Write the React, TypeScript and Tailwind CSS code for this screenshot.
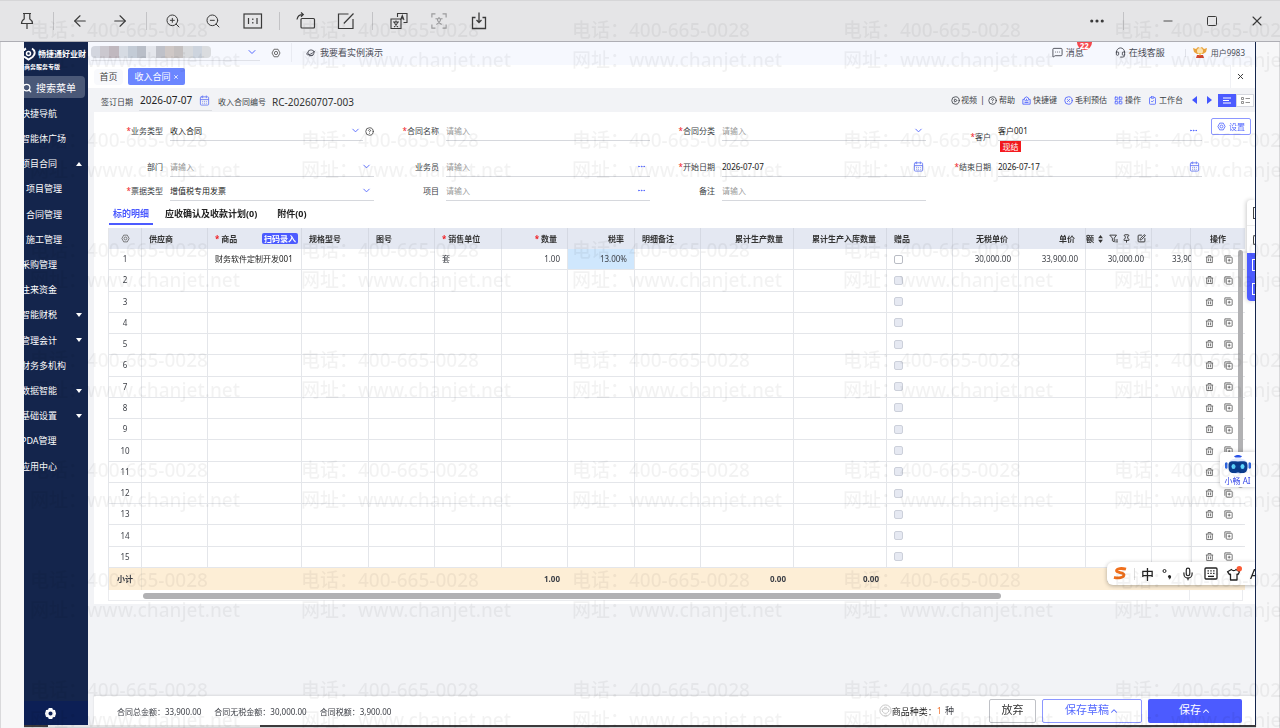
import { useState } from 'react'
import type { ReactNode } from 'react'
import {
  ArrowLeft,
  ArrowRight,
  CalendarDays,
  ChevronDown,
  ChevronUp,
  CircleHelp,
  CirclePercent,
  CirclePlay,
  ClipboardCheck,
  Ellipsis,
  Headset,
  LayoutGrid,
  MessageSquareMore,
  Mic,
  Minus,
  Pin,
  Search,
  Square,
  SquarePen,
  X,
  ZoomIn,
  ZoomOut,
} from 'lucide-react'

const menu = [
  { name: '快捷导航' },
  { name: '智能体广场' },
  { name: '项目合同', arrow: 'up' },
  { name: '项目管理', child: true },
  { name: '合同管理', child: true },
  { name: '施工管理', child: true },
  { name: '采购管理' },
  { name: '往来资金' },
  { name: '智能财税', arrow: 'down' },
  { name: '管理会计', arrow: 'down' },
  { name: '财务多机构' },
  { name: '数据智能', arrow: 'down' },
  { name: '基础设置', arrow: 'down' },
  { name: 'PDA管理' },
  { name: '应用中心' },
]

const colWidths = [33, 66, 94, 67, 66, 67, 66, 67, 66, 93, 93, 66, 66, 67, 66, 39, 54]

const mosaic = [
  'bg-[#d3d6df]', 'bg-[#cbc8cf]', 'bg-[#c0b8bf]', 'bg-[#d6dbe3]', 'bg-[#c3cbd6]', 'bg-[#b9bec8]',
  'bg-[#e4e6ec]', 'bg-[#bfc1c9]', 'bg-[#cfc8c6]', 'bg-[#c4c0c0]', 'bg-[#d8dadd]', 'bg-[#cdd4de]', 'bg-[#dadcdf]',
]

function Nut({ className }: { className?: string }) {
  return (
    <svg viewBox="0 0 16 16" className={className} fill="none" stroke="currentColor" strokeWidth="1.5">
      <path d="M4.8 2h6.4l3.2 6-3.2 6H4.8L1.6 8z" strokeLinejoin="round" />
      <circle cx="8" cy="8" r="2.6" />
    </svg>
  )
}

function Trash() {
  return (
    <svg viewBox="0 0 16 16" className="h-2.5 w-[9px]" fill="none" stroke="currentColor" strokeWidth="1.4">
      <path d="M1.5 4.5h13M5.5 4V1.8h5V4M3 4.5V14.300h10V4.5M6.3 7v5M9.7 7v5" />
    </svg>
  )
}

function CopyRow() {
  return (
    <svg viewBox="0 0 16 16" className="h-[9px] w-[9px]" fill="none" stroke="currentColor" strokeWidth="1.4">
      <rect x="4" y="4" width="10.5" height="10.5" rx="1" />
      <path d="M1.5 12V1.5H12M9.2 6.7v5M6.7 9.2h5" />
    </svg>
  )
}

function ToolButton({ label, children }: { label: string; children: ReactNode }) {
  return (
    <button aria-label={label} className="flex h-full w-10 items-center justify-center">
      {children}
    </button>
  )
}

function ToolDivider() {
  return (
    <div className="flex w-[13px] justify-center">
      <div className="h-[18px] w-px bg-[#c3c3c6]" />
    </div>
  )
}

function WindowBar() {
  return (
    <header className="flex h-[42px] shrink-0 items-center border-t border-b border-t-[#d6d6d8] border-b-[#aeaeb4] bg-[#e5e5e7] pl-[7px] text-[#3a3a3a]">
      <ToolButton label="固定">
        <svg viewBox="0 0 14 18" className="h-[18px] w-3.5" fill="none" stroke="currentColor" strokeWidth="1.2">
          <path d="M3 1.500h8M4.200 1.500v5.500C2.500 8 1.500 9.500 1.500 11.500h11C12.500 9.500 11.500 8 9.800 7V1.500M7 11.500v5.500" />
        </svg>
      </ToolButton>
      <ToolDivider />
      <ToolButton label="上一张">
        <ArrowLeft className="h-[18px] w-[18px]" strokeWidth={1.5} />
      </ToolButton>
      <ToolButton label="下一张">
        <ArrowRight className="h-[18px] w-[18px]" strokeWidth={1.5} />
      </ToolButton>
      <ToolDivider />
      <ToolButton label="放大">
        <ZoomIn className="h-4 w-4" strokeWidth={1.5} />
      </ToolButton>
      <ToolButton label="缩小">
        <ZoomOut className="h-4 w-4" strokeWidth={1.5} />
      </ToolButton>
      <ToolButton label="实际大小">
        <svg viewBox="0 0 20 16" className="h-4 w-5" fill="none" stroke="currentColor" strokeWidth="1.2">
          <rect x="1" y="1" width="17.5" height="14" />
          <path d="M5.5 5v6M14 5v6M9.8 5.5v1.6M9.8 9v1.6" />
        </svg>
      </ToolButton>
      <ToolDivider />
      <ToolButton label="旋转">
        <svg viewBox="0 0 20 18" className="h-[18px] w-5" fill="none" stroke="currentColor" strokeWidth="1.2">
          <rect x="5" y="6.5" width="13.5" height="9.5" rx="1" />
          <path d="M1 7.5C1.5 4.5 3.5 2.5 7 2.6M5 .5l2.3 2.1L5 4.8" />
        </svg>
      </ToolButton>
      <ToolButton label="编辑">
        <svg viewBox="0 0 18 18" className="h-[18px] w-[18px]" fill="none" stroke="currentColor" strokeWidth="1.2">
          <path d="M11.5 2H1.5v14.5H16V7M16.5 1.5L6.8 11.5" />
        </svg>
      </ToolButton>
      <ToolDivider />
      <ToolButton label="翻译">
        <svg viewBox="0 0 18 18" className="h-[18px] w-[18px]" fill="none" stroke="currentColor" strokeWidth="1.1">
          <path d="M7.5 5V1.5H17v9h-3.5" />
          <path d="M1 7h10v9.500H1zM3 10h6M6 8.500V10M4 15c2-1 3.200-2.500 3.700-5M8 15c-2-1-3.200-2.500-3.700-5M10.500 8l1.800-4.500L14 8M11 6.700h2.600" />
        </svg>
      </ToolButton>
      <ToolButton label="识别文字">
        <svg viewBox="0 0 18 18" className="h-4 w-4 text-[#9a9a9c]" fill="none" stroke="currentColor" strokeWidth="1.300">
          <path d="M1 5V1h4M13 1h4v4M17 13v4h-4M5 17H1v-4M5 6.500h8M9 4.500v2M6 13c3-1.500 4.500-3.500 5-6.500M12 13c-3-1.500-4.500-3.500-5-6.500" />
        </svg>
      </ToolButton>
      <ToolButton label="保存图片">
        <svg viewBox="0 0 18 18" className="h-[18px] w-[18px]" fill="none" stroke="currentColor" strokeWidth="1.3">
          <path d="M5.500 5.500H2.500V16.500h13V5.500h-3M9 .5v10M6.500 8L9 10.500 11.500 8" />
        </svg>
      </ToolButton>
      <div className="flex-1" />
      <ToolButton label="更多">
        <Ellipsis className="h-[18px] w-[18px]" strokeWidth={2.2} />
      </ToolButton>
      <ToolDivider />
      <div className="flex h-full pl-4">
        <button aria-label="最小化" className="flex w-11 items-center justify-center">
          <Minus className="h-[14px] w-[14px]" strokeWidth={1.5} />
        </button>
        <button aria-label="最大化" className="flex w-11 items-center justify-center">
          <Square className="h-3 w-3" strokeWidth={2} />
        </button>
        <button aria-label="关闭" className="flex w-[46px] items-center justify-center">
          <X className="h-4 w-4" strokeWidth={1.6} />
        </button>
      </div>
    </header>
  )
}

function Sidebar() {
  return (
    <aside className="flex w-16 shrink-0 flex-col overflow-hidden bg-[#14254c] text-white">
      <div className="flex h-5 items-center gap-0.5 pt-1 whitespace-nowrap">
        <svg viewBox="0 0 12 14" className="h-3.5 w-3 shrink-0" fill="none" stroke="currentColor">
          <circle cx="4.500" cy="6.5" r="2" strokeWidth="1.5" />
          <path d="M8 1.500c3.500 2 3.500 6 .5 8.500L4.500 12.500 0 9.500M2 1.500C.5 2.300 0 3 0 4" strokeWidth="2" />
        </svg>
        <span className="text-[8px] font-bold">畅捷通好业财</span>
      </div>
      <div className="h-3.5 text-[6px] leading-[11px] font-bold whitespace-nowrap">商务服务专版</div>
      <button className="mr-[3px] flex h-[22px] shrink-0 items-center gap-1 rounded-r-sm bg-[#4a5877] pt-0.5 text-[10px]">
        <Search className="-ml-0.5 h-2.5 w-2.5" strokeWidth={3} />
        搜索菜单
      </button>
      <ul className="mt-[3px] flex h-[378px] flex-col text-[9px]">
        {menu.map((item) => (
          <li key={item.name} className="flex flex-1 items-center justify-between pr-1.5">
            <a href="#" className={item.child ? 'ml-0.5 whitespace-nowrap' : '-ml-[3px] whitespace-nowrap'}>
              {item.name}
            </a>
            {item.arrow && (
              <svg viewBox="0 0 6 4" className={item.arrow === 'up' ? 'h-1 w-1.5' : 'h-1 w-1.5 rotate-180'} fill="currentColor">
                <path d="M3 0l3 4H0z" />
              </svg>
            )}
          </li>
        ))}
      </ul>
      <button aria-label="系统设置" className="mt-auto flex h-6 shrink-0 items-center justify-center bg-[#0c1f55] pr-3">
        <svg viewBox="0 0 16 16" className="h-[11px] w-[11px]" fill="currentColor">
          <path fillRule="evenodd" d="M5.500 0h5l1 2.500 3 .5L16 8l-1.500 5-3 .5-1 2.500h-5l-1-2.500-3-.5L0 8l1.500-5 3-.5zM8 5a3 3 0 100 6 3 3 0 000-6z" />
        </svg>
      </button>
    </aside>
  )
}

function TopBar() {
  return (
    <div className="flex h-[23px] shrink-0 items-center bg-[#f6f8fe] pb-0.5 text-[9px] text-[#4a4d57]">
      <button aria-label="切换账套" className="ml-[3px] flex h-[17px] w-[169px] items-center justify-between border-b border-[#dfe1e8] pr-0.5">
        <span className="flex h-3 w-[120px] overflow-hidden rounded-sm">
          {mosaic.map((tone) => (
            <span key={tone} className={`flex-1 ${tone}`} />
          ))}
        </span>
        <ChevronDown className="h-3 w-3 text-[#5468ff]" strokeWidth={2} />
      </button>
      <button aria-label="账套设置" className="ml-[11px] text-[#666]">
        <Nut className="h-2.5 w-2.5" />
      </button>
      <div className="ml-2.5 h-[19px] w-px bg-[#e9ebf2]" />
      <a href="#" className="ml-3.5 flex items-center gap-1">
        <svg viewBox="0 0 16 12" className="h-2 w-2.5" fill="none" stroke="currentColor" strokeWidth="1.4">
          <ellipse cx="8" cy="5.500" rx="5" ry="4.500" />
          <path d="M3.500 5C0 7 .5 9.500 4 8.700 8 8 12.500 5 14.500 2.500M5 10.500l6-.5" />
        </svg>
        我要看实例演示
      </a>
      <div className="flex-1" />
      <a href="#" className="relative mr-[31px] flex h-full items-center gap-[3px]">
        <MessageSquareMore className="h-[11px] w-[11px]" strokeWidth={2} />
        消息
        <span className="absolute top-0 left-[25px] rounded-b-lg bg-[#f5484d] px-[3px] text-[8px] leading-2 font-bold text-white">22</span>
      </a>
      <a href="#" className="mr-5 flex items-center gap-[3px]">
        <Headset className="h-[11px] w-[11px]" strokeWidth={2} />
        在线客服
      </a>
      <div className="mr-[7px] h-2 w-px bg-[#e0e2ea]" />
      <a href="#" className="mr-2.5 flex items-center gap-1 text-[8px]">
        <svg viewBox="0 0 14 13" className="h-[13px] w-3.5">
          <path d="M0 2l3 1 2-2 2 1 2-1 2 2 3-1-1 4-3 2H4L1 6z" fill="#e9a23b" />
          <circle cx="7" cy="5" r="3" fill="#fbe3b0" />
          <path d="M4 9h6l1 3H3z" fill="#d4472e" />
          <path d="M5.500 7h3l-1.500 3z" fill="#f6c34a" />
        </svg>
        用户9983
      </a>
    </div>
  )
}

function PageTabs() {
  return (
    <div className="flex h-[23px] shrink-0 items-center bg-white pl-1.5 text-[9px]">
      <button className="flex h-4 w-[29px] items-center justify-center rounded-sm bg-[#f8f9fc] text-[#444]">首页</button>
      <button className="ml-[5px] flex h-[17px] w-[57px] items-center justify-center gap-0.5 rounded-xs bg-[#6b86ff] text-white">
        收入合同
        <X className="h-1.5 w-1.5" strokeWidth={3} />
      </button>
      <button aria-label="关闭页面" className="mr-[5px] ml-auto flex h-full w-5 items-center justify-center border-l border-[#f0f1f5] text-[#333]">
        <X className="h-[9px] w-[9px]" strokeWidth={2.5} />
      </button>
    </div>
  )
}

function DocBar() {
  return (
    <div className="flex h-6 shrink-0 items-center pl-[13px] text-[8px] text-[#3c3f46]">
      <label htmlFor="signDate" className="pt-1 whitespace-nowrap">签订日期</label>
      <div className="ml-1.5 flex h-[22px] w-[73px] items-center border-b border-[#dcdee2] pt-0.5">
        <input id="signDate" defaultValue="2026-07-07" className="w-[58px] pl-px text-[10px] text-[#222] outline-none" />
        <CalendarDays className="mr-0.5 ml-auto h-[11px] w-[11px] text-[#6f80f5]" strokeWidth={2} />
      </div>
      <span className="ml-1.5 pt-1 whitespace-nowrap">收入合同编号</span>
      <span className="ml-1.5 pt-1 text-[10px] whitespace-nowrap text-[#333]">RC-20260707-003</span>
      <div className="ml-auto flex items-center whitespace-nowrap">
        <a href="#" className="flex items-center gap-px">
          <CirclePlay className="h-[9px] w-[9px]" strokeWidth={2.200} />
          视频
        </a>
        <span className="mx-[3px] text-[9px]">|</span>
        <a href="#" className="flex items-center gap-0.5">
          <CircleHelp className="h-[9px] w-[9px]" strokeWidth={2.200} />
          帮助
        </a>
        <a href="#" className="ml-[7px] flex items-center gap-0.5">
          <svg viewBox="0 0 16 16" className="h-[9px] w-[9px] text-[#5468ff]" fill="none" stroke="currentColor" strokeWidth="1.600">
            <path d="M1.500 6h3V3.500L8 1.500l3.500 2V6h3v8.500h-13zM4.500 8.500h7M4.500 11.500h7M8 5v2" />
          </svg>
          快捷键
        </a>
        <a href="#" className="ml-[7px] flex items-center gap-0.5">
          <CirclePercent className="h-[9px] w-[9px] text-[#5468ff]" strokeWidth={2.400} />
          毛利预估
        </a>
        <a href="#" className="ml-[7px] flex items-center gap-0.5">
          <LayoutGrid className="h-[9px] w-[9px] text-[#5468ff]" strokeWidth={2.400} />
          操作
        </a>
        <a href="#" className="ml-[7px] flex items-center gap-0.5">
          <ClipboardCheck className="h-[9px] w-[9px] text-[#5468ff]" strokeWidth={2.200} />
          工作台
        </a>
        <button aria-label="上一单" className="ml-[9px] text-[#4356ff]">
          <svg viewBox="0 0 5 8" className="h-2 w-[5px]" fill="currentColor"><path d="M5 0v8L0 4z" /></svg>
        </button>
        <button aria-label="下一单" className="mr-1.5 ml-2.5 text-[#4356ff]">
          <svg viewBox="0 0 5 8" className="h-2 w-[5px]" fill="currentColor"><path d="M0 0v8l5-4z" /></svg>
        </button>
        <button aria-label="列表模式" className="flex h-[13px] w-[18px] items-center justify-center bg-[#4c5bff] text-white">
          <svg viewBox="0 0 8 7" className="h-[7px] w-2" stroke="currentColor"><path d="M0 1h8M0 3.500h6M0 6h8" /></svg>
        </button>
        <button aria-label="卡片模式" className="mr-px flex h-[13px] w-[18px] items-center justify-center border border-[#d5d7de] bg-white text-[#777]">
          <svg viewBox="0 0 9 7" className="h-[7px] w-[9px]" fill="none" stroke="currentColor" strokeWidth="0.800">
            <path d="M.5.5h2v2h-2zM.5 4.500h2v2h-2zM4.500 1.500H9M4.500 5.500H9" />
          </svg>
        </button>
      </div>
    </div>
  )
}

type FieldProps = {
  id: string
  label: string
  required?: boolean
  value?: string
  kind: 'select' | 'text' | 'lookup' | 'date'
  help?: boolean
  tag?: string
  focused?: boolean
}

function Field({ id, label, required, value, kind, help, tag, focused }: FieldProps) {
  return (
    <div className={tag ? 'flex items-center gap-[7px]' : 'flex items-start gap-[7px]'}>
      <label htmlFor={id} className="w-[65px] text-right leading-5 text-[#3c3f46]">
        {required && <span className="text-[#f0191e]">*</span>}
        {label}
      </label>
      <div className="min-w-0 flex-1">
        <div className="flex items-center">
          <div className="flex h-5 flex-1 items-center border-b border-[#d6d8dd]">
            {kind === 'select' ? (
              <select id={id} defaultValue={value ?? ''} className={value ? 'min-w-0 flex-1 appearance-none text-[#222] outline-none' : 'min-w-0 flex-1 appearance-none text-[#999] outline-none'}>
                <option value={value ?? ''}>{value ?? '请输入'}</option>
              </select>
            ) : (
              <input id={id} defaultValue={value} autoFocus={focused} placeholder="请输入" className="min-w-0 flex-1 text-[#222] outline-none placeholder:text-[#999]" />
            )}
            {kind === 'select' && <ChevronDown className="mr-0.5 h-[11px] w-[11px] text-[#5468ff]" strokeWidth={2} />}
            {kind === 'lookup' && (
              <button type="button" aria-label={`选择${label}`} className="mr-1 text-[#5468ff]">
                <Ellipsis className="h-[9px] w-[9px]" strokeWidth={2.5} />
              </button>
            )}
            {kind === 'date' && <CalendarDays className="mr-0.5 h-[11px] w-[11px] text-[#6f80f5]" strokeWidth={2} />}
          </div>
          {help && <CircleHelp className="ml-0.5 h-[9px] w-[9px] text-[#444]" strokeWidth={2.200} />}
        </div>
        {tag && <span className="ml-0.5 block h-[11px] w-[21px] bg-[#f5191e] text-center leading-[11px] text-white">{tag}</span>}
      </div>
    </div>
  )
}

function ContractForm() {
  return (
    <div className="flex items-start pt-[9px] pr-1 pl-1 text-[8px]">
      <form className="grid flex-1 grid-cols-4 items-start gap-y-1">
        <Field id="bizType" label="业务类型" required kind="select" value="收入合同" help />
        <Field id="contractName" label="合同名称" required kind="text" />
        <Field id="contractClass" label="合同分类" required kind="select" />
        <div className="pb-px">
          <Field id="customer" label="客户" required kind="lookup" value="客户001" tag="现结" />
        </div>
        <Field id="dept" label="部门" kind="select" />
        <Field id="salesman" label="业务员" kind="lookup" />
        <Field id="startDate" label="开始日期" required kind="date" value="2026-07-07" />
        <Field id="endDate" label="结束日期" required kind="date" value="2026-07-17" focused />
        <Field id="billType" label="票据类型" required kind="select" value="增值税专用发票" />
        <Field id="project" label="项目" kind="lookup" />
        <Field id="remark" label="备注" kind="text" />
      </form>
      <button className="-mt-[3px] ml-[9px] flex h-[17px] w-10 items-center justify-center gap-[3px] rounded-xs border border-[#8c97ff] text-[#5468ff]">
        <Nut className="h-[9px] w-[9px]" />
        设置
      </button>
    </div>
  )
}

function Th({ children, right, required }: { children?: ReactNode; right?: boolean; required?: boolean }) {
  return (
    <th className={right ? 'overflow-hidden border-r border-[#d5d9e3] px-2.5 text-right' : 'overflow-hidden border-r border-[#d5d9e3] px-[7px] text-left'}>
      {required && <span className="mr-0.5 text-[#f0191e]">*</span>}
      {children}
    </th>
  )
}

function DetailTable() {
  const cell = 'overflow-hidden border-r border-b border-[#e4e6ea] px-[7px]'
  return (
    <div className="relative mr-3 ml-3.5">
      <table className="h-[362px] w-full table-fixed border-separate border-spacing-0 border-l border-[#e4e6ea] text-[8px] whitespace-nowrap text-[#3c3f46]">
        <colgroup>
          {colWidths.map((w, i) => (
            <col key={i} style={{ width: w }} />
          ))}
        </colgroup>
        <thead className="bg-[#e4e8f2] text-[#333]">
          <tr className="h-[21px]">
            <th className="border-r border-[#d5d9e3]">
              <Nut className="mx-auto h-[9px] w-[9px] text-[#666]" />
            </th>
            <Th>供应商</Th>
            <th className="border-r border-[#d5d9e3] px-[7px]">
              <div className="flex items-center">
                <span className="mr-0.5 text-[#f0191e]">*</span>商品
                <button className="-mr-1 ml-auto h-[11px] w-9 rounded-xs bg-[#4c5bff] leading-[11px] text-white">扫码录入</button>
              </div>
            </th>
            <Th>规格型号</Th>
            <Th>图号</Th>
            <Th required>销售单位</Th>
            <Th right required>数量</Th>
            <Th right>税率</Th>
            <Th>明细备注</Th>
            <Th right>累计生产数量</Th>
            <Th right>累计生产入库数量</Th>
            <Th>赠品</Th>
            <Th right>无税单价</Th>
            <Th right>单价</Th>
            <th className="overflow-hidden border-r border-[#d5d9e3]">
              <div className="flex items-center gap-1">
                额
                <svg viewBox="0 0 6 10" className="h-2 w-[5px]" fill="currentColor">
                  <path d="M3 0l3 4H0zM3 10L0 6h6z" />
                </svg>
                <svg viewBox="0 0 12 12" className="ml-0.5 h-[9px] w-[9px]" fill="none" stroke="currentColor" strokeWidth="1.200">
                  <path d="M1 1.500h9L7 5.500v5L4.500 9V5.500zM8.500 8H12M8.500 10.500H12" />
                </svg>
                <Pin className="h-[9px] w-[9px]" strokeWidth={2.500} />
                <SquarePen className="ml-0.5 h-[9px] w-[9px]" strokeWidth={2.500} />
              </div>
            </th>
            <Th />
            <th>操作</th>
          </tr>
        </thead>
        <tbody>
          {Array.from({ length: 15 }, (_, i) => {
            const filled = i === 0
            return (
              <tr key={i}>
                <td className={`${cell} text-center`}>{i + 1}</td>
                <td className={cell} />
                <td className={`${cell} text-[#222]`}>{filled && '财务软件定制开发001'}</td>
                <td className={cell} />
                <td className={cell} />
                <td className={cell}>{filled && '套'}</td>
                <td className={`${cell} text-right`}>{filled && '1.00'}</td>
                <td className={filled ? `${cell} bg-[#cfe7fd] text-right` : cell}>{filled && '13.00%'}</td>
                <td className={cell} />
                <td className={cell} />
                <td className={cell} />
                <td className={cell}>
                  <input
                    type="checkbox"
                    aria-label={`第${i + 1}行赠品`}
                    disabled={!filled}
                    className="block h-[9px] w-[9px] appearance-none rounded-xs border border-[#b9bcc4] bg-white disabled:border-[#ccd0da] disabled:bg-[#e6e9f2]"
                  />
                </td>
                <td className={`${cell} text-right`}>{filled && '30,000.00'}</td>
                <td className={`${cell} text-right`}>{filled && '33,900.00'}</td>
                <td className={`${cell} text-right`}>{filled && '30,000.00'}</td>
                <td className="overflow-hidden border-b border-[#e4e6ea] pl-5">{filled && '33,900.00'}</td>
                <td className="border-b border-l border-[#e4e6ea] bg-white shadow-[-2px_0_2px_rgba(0,0,0,0.05)]">
                  <div className="flex items-center justify-center gap-2.5 text-[#555]">
                    <button aria-label="删除行"><Trash /></button>
                    <button aria-label="复制行"><CopyRow /></button>
                  </div>
                </td>
              </tr>
            )
          })}
        </tbody>
        <tfoot className="bg-[#fdeed6] font-bold">
          <tr className="h-[22px]">
            <td className="border-r border-[#eee2cd] pl-2">小计</td>
            <td colSpan={6} className="pr-2 text-right">1.00</td>
            <td colSpan={3} className="pr-2 text-right">0.00</td>
            <td className="pr-2 text-right">0.00</td>
            <td colSpan={4} className="pr-2 text-right">30,000.00</td>
            <td colSpan={2} />
          </tr>
        </tfoot>
      </table>
      <div className="flex h-[11px] border-x border-b border-[#ebecef] pl-[34px]">
        <div className="mt-[3px] h-1.5 w-[82%] max-w-[858px] rounded-full bg-[#b1b1b3]" />
        <div className="ml-auto w-[53px] border-l border-[#ebecef]" />
      </div>
      <div className="absolute top-[22px] right-0 h-[238px] w-[5px] rounded-full bg-[#b1b1b3]" />
    </div>
  )
}

const detailTabs = ['标的明细', '应收确认及收款计划(0)', '附件(0)']

function ContractPanel() {
  const [tab, setTab] = useState(detailTabs[0])
  return (
    <section className="ml-1.5 bg-white pb-[3px]">
      <ContractForm />
      <div role="tablist" className="mb-[3px] ml-[15px] flex h-6 gap-1 text-[9px] font-bold text-[#222]">
        {detailTabs.map((name) => (
          <button
            key={name}
            role="tab"
            aria-selected={tab === name}
            onClick={() => setTab(name)}
            className={
              tab === name
                ? 'border-b-2 border-[#4c5bff] px-1 pt-1 text-[#4c5bff]'
                : 'border-b-2 border-transparent px-2 pt-1'
            }
          >
            {name}
          </button>
        ))}
      </div>
      <DetailTable />
    </section>
  )
}

function FooterBar() {
  return (
    <footer className="mt-auto ml-1.5 flex h-[29px] shrink-0 items-center bg-white pr-[13px] pl-[23px] text-[8px] whitespace-nowrap text-[#3c3f46] shadow-[0_-1px_2px_rgba(0,0,0,0.1)]">
      <span className="pt-0.5">合同总金额：33,900.00</span>
      <span className="ml-[13px] pt-0.5">合同无税金额：30,000.00</span>
      <span className="ml-[13px] pt-0.5">合同税额：3,900.00</span>
      <div className="mr-[35px] ml-auto flex items-center">
        <svg viewBox="0 0 14 14" className="h-[13px] w-[13px] text-[#c3c3c3]" fill="none" stroke="currentColor">
          <circle cx="7" cy="7" r="6" />
          <path d="M3.500 5.500h7v2c-1.500 3.500-5.500 3.500-7 0zM5 5l1-1.500h2L9 5" />
        </svg>
        <span className="pt-0.5 text-[9px] text-[#222]">商品种类：</span>
        <span className="text-[9px] text-[#f07a3a]">1</span>
        <span className="ml-[3px] text-[9px]">种</span>
      </div>
      <button className="h-6 w-[47px] rounded-xs border border-[#bfc1c6] bg-white text-[11px] text-[#333]">放弃</button>
      <button className="ml-1.5 flex h-6 w-[100px] items-center justify-center rounded-xs border border-[#8c97ff] bg-white text-[11px] text-[#5468ff]">
        保存草稿
        <ChevronUp className="h-2.5 w-2.5" strokeWidth={2.500} />
      </button>
      <button className="ml-1.5 flex h-6 w-[94px] items-center justify-center rounded-xs bg-[#4c5bff] text-[11px] text-white">
        保存
        <ChevronUp className="h-2.5 w-2.5" strokeWidth={2.500} />
      </button>
    </footer>
  )
}

function SideDock() {
  return (
    <div className="absolute top-[158px] right-0 w-2 overflow-hidden rounded-l-sm bg-white shadow-[-1px_0_4px_rgba(0,0,0,0.2)]">
      <div className="flex h-[26px] items-center justify-end border-b border-[#eee]">
        <div className="h-3 w-0.5 border-y border-l border-[#444]" />
      </div>
      <div className="flex h-[27px] items-center justify-end">
        <div className="h-2.5 w-0.5 rounded-l-full border-y border-l border-[#444]" />
      </div>
      <div className="flex h-6 items-center justify-end bg-[#4c5bff]">
        <div className="h-3 w-[3px] border-y border-l border-white" />
      </div>
      <div className="flex h-6 items-center justify-end bg-[#4c5bff]">
        <div className="h-3 w-[3px] border-y border-l border-white" />
      </div>
    </div>
  )
}

function Assistant() {
  return (
    <button className="absolute top-[410px] right-0 flex h-[35px] w-[35px] flex-col items-center rounded-l-sm bg-white pt-0.5 text-[8px] leading-[10px] text-[#3445e8] shadow-[0_0_4px_rgba(0,0,0,0.25)]">
      <svg viewBox="0 0 26 22" className="h-[22px] w-[26px]">
        <path d="M9 2.500c2-2 6-2 8 0l-1.500 1h-5z" fill="#2952e8" />
        <path d="M3 11c0-9 20-9 20 0v3c0 8-20 8-20 0z" fill="#dfe9ff" />
        <path d="M0 9c1-1 2-1 2.500 0v5C2 15 1 15 0 14zM23.500 9c.5-1 1.500-1 2.500 0v5c-1 1-2 1-2.500 0z" fill="#2f66e0" />
        <path d="M3.500 12c0-6 3.500-4.500 9.500-4.500s9.500-1.500 9.500 4.500c0 8-4 7.500-9.500 6.500-5.500 1-9.500 1.500-9.500-6.500z" fill="#0b3d8e" />
        <ellipse cx="8.500" cy="12.500" rx="2" ry="2.500" fill="#5fd8ff" />
        <ellipse cx="17.500" cy="12.500" rx="2" ry="2.500" fill="#5fd8ff" />
      </svg>
      <span>小畅 AI</span>
    </button>
  )
}

function ImeBar() {
  return (
    <div className="absolute top-[520px] right-0 flex h-[23px] w-[148px] items-center overflow-hidden rounded-l-md bg-white pl-1.5 text-[#222] shadow-[0_1px_4px_rgba(0,0,0,0.3)]">
      <svg viewBox="0 0 14 13" className="h-[13px] w-3.5 shrink-0" fill="none" stroke="#f0701d" strokeWidth="2.800">
        <path d="M13 2.200C9 1 3.500 1.200 3.500 3.700c0 2.300 7.500 1.300 7.500 4.100 0 3-6 3.800-10 2.600" />
      </svg>
      <div className="ml-[7px] h-3 w-px shrink-0 bg-[#ddd]" />
      <span className="ml-1.5 text-[13px] leading-4 font-medium">中</span>
      <svg viewBox="0 0 10 12" className="ml-2 h-3 w-2.5 shrink-0" fill="currentColor">
        <circle cx="2.500" cy="3" r="1.500" fill="none" stroke="currentColor" />
        <circle cx="7.500" cy="8.500" r="1.500" />
        <path d="M9 8.500c0 1.500-.7 2.500-2 3l-.3-.8c.8-.3 1-.8 1-1.500z" />
      </svg>
      <Mic className="ml-[9px] h-3.5 w-3.5 shrink-0" strokeWidth={2} />
      <svg viewBox="0 0 14 13" className="ml-[9px] h-[13px] w-3.5 shrink-0" fill="none" stroke="currentColor" strokeWidth="1.300">
        <rect x="1" y="1" width="12" height="11" rx="1" />
        <path d="M3.500 3.800h7M3.500 6.300h7" strokeDasharray="1.400 1.400" />
        <path d="M4 9.300h6" />
      </svg>
      <svg viewBox="0 0 16 16" className="ml-2 h-4 w-4 shrink-0" fill="none" stroke="currentColor" strokeWidth="1.300">
        <path d="M5.500 3.500C6.500 5 9 5 10 3.500l3.500 2.200L12 8.500l-1-.3V14H4.500V8.200l-1 .3L1.500 5.700z" strokeLinejoin="round" />
        <circle cx="13.300" cy="2.700" r="2.700" fill="#fb5a34" stroke="none" />
      </svg>
      <span className="ml-2 text-[14px] leading-4">A</span>
    </div>
  )
}

function Watermark() {
  return (
    <div aria-hidden="true" className="pointer-events-none absolute inset-0 grid auto-rows-[110px] grid-cols-[repeat(5,271px)] overflow-hidden pt-[15px] pl-[30px] text-[19px] leading-[30px] font-medium whitespace-nowrap text-black/5">
      {Array.from({ length: 35 }, (_, i) => (
        <div key={i}>
          <p>电话：400-665-0028</p>
          <p>网址：www.chanjet.net</p>
        </div>
      ))}
    </div>
  )
}

export default function App() {
  return (
    <div className="relative flex h-screen flex-col overflow-hidden bg-[#f7f7f8] font-['Noto_Sans','Noto_Sans_CJK_SC',sans-serif]">
      <WindowBar />
      <div className="flex min-h-0 flex-1 border-x border-x-[#d9d9db] pr-[23px] pl-[23px]">
        <div className="flex min-w-0 flex-1 flex-col">
          <div className="flex min-h-0 flex-1">
            <Sidebar />
            <main className="relative flex min-w-0 flex-1 flex-col overflow-hidden border-r border-[#14254c] bg-[#f2f3f6]">
              <TopBar />
              <PageTabs />
              <DocBar />
              <ContractPanel />
              <FooterBar />
              <SideDock />
              <Assistant />
              <ImeBar />
            </main>
          </div>
          <div className="flex h-0.5 shrink-0 bg-[#3c3a3c]">
            <div className="ml-6 w-[212px] bg-[#e4e4e4]" />
          </div>
          <div className="h-px shrink-0 bg-[#d5d5d7]" />
        </div>
      </div>
      <Watermark />
    </div>
  )
}
